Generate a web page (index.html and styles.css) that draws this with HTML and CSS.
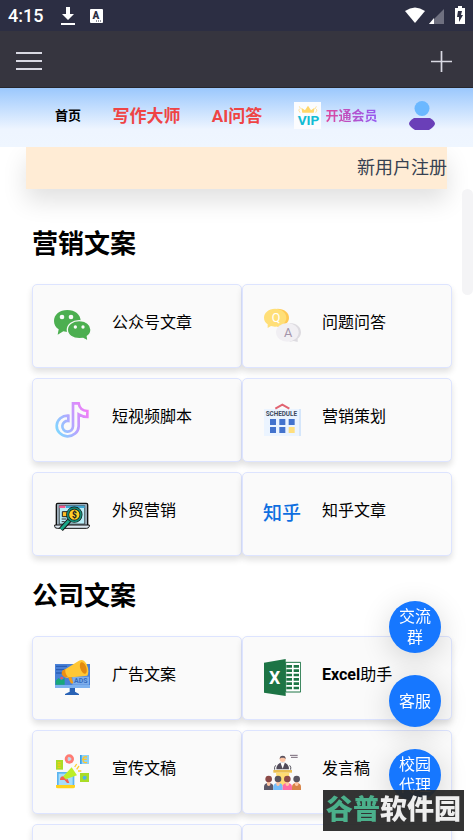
FILE: index.html
```html
<!DOCTYPE html>
<html lang="zh-CN">

<head>
    <meta charset="UTF-8">
    <meta name="viewport" content="width=device-width, initial-scale=1.0">
    <title>营销文案</title>
    <link rel="stylesheet" href="styles.css">
</head>

<body>
    <div class="status-bar">
        <span class="time">4:15</span>
        <svg class="download" width="14" height="18" viewBox="0 0 14 18">
            <path d="M5 0h4v7h4l-6 6-6-6h4z" fill="#fff" />
            <path d="M0 16h14v2H0z" fill="#fff" />
        </svg>
        <svg class="badge-a" width="13" height="14" viewBox="0 0 13 14">
            <rect width="13" height="14" rx="1" fill="#fff" />
            <text x="2.5" y="10" font-size="10" font-weight="900" fill="#2c2e43">A</text>
            <path d="M6 12h1M8 12h1M10 12h1" stroke="#2c2e43" />
        </svg>
        <svg class="signals" width="60" height="19" viewBox="0 0 60 19">
            <path d="M0 5Q10-2 20 5L10 17z" fill="#fff" />
            <path d="M39 3v15H24z" fill="#6f7080" />
            <path d="M29 12v6h-5z" fill="#fff" />
            <path d="M50 2h3V0h4v2h3v16H50z" fill="#fff" />
            <path d="M53 5h4l-1 4h2l-4 7v-5h-2z" fill="#2c2e43" />
        </svg>
    </div>

    <header class="app-bar">
        <button type="button" aria-label="菜单">
            <svg width="26" height="20" viewBox="0 0 26 20">
                <path d="M0 2h26M0 10h26M0 18h26" stroke="#d9d9e3" stroke-width="2" />
            </svg>
        </button>
        <button type="button" aria-label="新建">
            <svg width="21" height="21" viewBox="0 0 21 21">
                <path d="M0 10.500h21M10.500 0v21" stroke="#d9d9e3" stroke-width="1.700" />
            </svg>
        </button>
    </header>

    <nav class="nav">
        <a href="#" class="home">首页</a>
        <a href="#" class="hot">写作大师</a>
        <a href="#" class="hot">AI问答</a>
        <a href="#" class="vip">
            <svg width="27" height="27" viewBox="0 0 81 81">
                <rect width="81" height="81" fill="#fbfcfe" />
                <path d="M25 32l-3-15 11 8 9-14 9 14 11-8-3 15z" fill="#ffd76a" />
                <path d="M16 13l3 6-5 5 4 8M67 13l-3 6 5 5-4 8" fill="none" stroke="#ffe3a0" stroke-width="3" />
                <text x="11" y="69" font-size="41" font-weight="700" fill="#12bcd4">VIP</text>
            </svg>
            <span>开通会员</span>
        </a>
        <a href="#" aria-label="我的">
            <svg class="user" width="26" height="29" viewBox="0 0 26 29">
                <circle cx="13" cy="7.500" r="7.500" fill="#6bb8ff" />
                <path d="M0 23q0-3 5-6h16q5 3 5 6-1 3-6 6H6q-5-3-6-6z" fill="#6a3fb8" />
            </svg>
        </a>
    </nav>

    <div class="content">
        <a href="#" class="banner">新用户注册</a>
        <div class="scroll-thumb"></div>

        <main>
            <h2>营销文案</h2>
            <div class="cards">
                <a href="#" class="card">
                    <svg viewBox="0 0 114 114">
                        <path d="M43 9c23 0 40 14 40 33S66 75 43 75l-12-2-17 10 3-16C8 61 3 52 3 42 3 23 20 9 43 9z" fill="#4caf50" />
                        <g fill="#fafafa">
                            <circle cx="27" cy="30" r="7" />
                            <circle cx="54" cy="30" r="7" />
                        </g>
                        <path d="M79 41c20 0 35 12 35 27 0 9-4 15-11 20l2 14-15-8-11 1c-20 0-36-11-36-27s16-27 36-27z" fill="#4caf50" stroke="#fafafa" stroke-width="4" />
                        <g fill="#fafafa">
                            <circle cx="67" cy="60" r="5" />
                            <circle cx="90" cy="60" r="5" />
                        </g>
                    </svg>
                    <span>公众号文章</span>
                </a>
                <a href="#" class="card">
                    <svg viewBox="0 0 114 114">
                        <path d="M43 5c21 0 35 12 35 27S64 59 43 59z" fill="#ffc955" />
                        <path d="M36 5c20 0 34 12 34 27S56 59 36 59l-12-2-10 6V52C7 47 3 40 3 32 3 17 17 5 36 5z" fill="#ffdf78" />
                        <text x="26" y="45" font-size="38" fill="#fff">Q</text>
                        <path d="M80 48c20 0 34 12 34 28 0 9-4 15-10 19v10l-12-3-12 2z" fill="#dddbe0" />
                        <ellipse cx="73" cy="76" rx="34" ry="28" fill="#f1eff3" />
                        <text x="63" y="90" font-size="38" fill="#a394aa">A</text>
                    </svg>
                    <span>问题问答</span>
                </a>
                <a href="#" class="card">
                    <svg viewBox="0 0 114 114">
                        <defs>
                            <linearGradient id="note" gradientUnits="userSpaceOnUse" x1="9" y1="80" x2="107" y2="35">
                                <stop offset="0" stop-color="#82d4ff" />
                                <stop offset=".5" stop-color="#b9a2ff" />
                                <stop offset="1" stop-color="#f37cf7" />
                            </linearGradient>
                        </defs>
                        <path d="M60 7h17c2 13 11 22 26 23v18c-9 0-18-3-26-8v36a33 31 0 1 1-31-32v16a16 16 0 1 0 14 16z" fill="none" stroke="url(#note)" stroke-width="8" />
                    </svg>
                    <span>短视频脚本</span>
                </a>
                <a href="#" class="card">
                    <svg viewBox="0 0 114 114">
                        <path d="M3 24h111v81H3z" fill="#ebf4ff" />
                        <path d="M108 24h6v81h-6z" fill="#d5e6fa" />
                        <path d="M37 23l21-12 21 12" fill="none" stroke="#e16472" stroke-width="6" />
                        <text x="8" y="45" font-size="19" font-weight="700" fill="#3b485b">SCHEDULE</text>
                        <path d="M21 54h18v18H21zM49 54h18v18H49zM77 54h18v18H77zM21 78h18v18H21zM49 78h18v18H49z" fill="#4373cd" />
                        <path d="M77 78h18v18H77z" fill="#ffdf7d" />
                    </svg>
                    <span>营销策划</span>
                </a>
                <a href="#" class="card">
                    <svg viewBox="0 0 114 114">
                        <rect x="10" y="25" width="94" height="68" rx="4" fill="#9caebb" stroke="#111" stroke-width="4" />
                        <path d="M19 32h76v55H19z" fill="#b9edf8" stroke="#222" stroke-width="2" />
                        <path d="M19 32h18v7H19z" fill="#f2578e" />
                        <path d="M39 32h56v7H39z" fill="#3da8d6" />
                        <path d="M28 50h20v15H28z" fill="#ffbd24" stroke="#222" stroke-width="3" />
                        <path d="M26 72h14M26 80h9" stroke="#333" stroke-width="3" />
                        <path d="M5 90h104v4q-2 6-8 6H13q-8 0-8-6z" fill="#dce7f0" stroke="#111" stroke-width="3" />
                        <path d="M49 76l-25 27" stroke="#111" stroke-width="15" />
                        <path d="M49 76l-25 27" stroke="#1aa789" stroke-width="9" />
                        <circle cx="64" cy="59" r="20" fill="#ffce28" stroke="#111" stroke-width="9" />
                        <circle cx="64" cy="59" r="20" fill="none" stroke="#168c78" stroke-width="5" />
                        <text x="57" y="69" font-size="25" font-weight="900" fill="#222">$</text>
                    </svg>
                    <span>外贸营销</span>
                </a>
                <a href="#" class="card">
                    <b class="zhihu">知乎</b>
                    <span>知乎文章</span>
                </a>
            </div>

            <h2>公司文案</h2>
            <div class="cards">
                <a href="#" class="card">
                    <svg viewBox="0 0 114 114">
                        <path d="M50 85h16v13l12 7v3H36v-3l14-7z" fill="#2862b5" />
                        <path d="M6 15h105v72H6z" fill="#4980d7" />
                        <path d="M6 78h105v9H6z" fill="#7eb2ef" />
                        <path d="M9 22h33M9 32h28M9 42h20" stroke="#2b5fb5" stroke-width="4" />
                        <path d="M8 77V65l9-8 8 7 10-7v20z" fill="#18a879" />
                        <circle cx="26" cy="57" r="4" fill="#e65a63" />
                        <path d="M58 53h50v24H58z" fill="#7eaeea" />
                        <text x="63" y="73" font-size="21" font-weight="700" fill="#356bbd">ADS</text>
                        <path d="M28 36L78 5q13-8 23 11 9 20 2 34L42 56q-13 0-14-20z" fill="#ffc735" />
                        <path d="M28 35q-7 12 8 20l9-2q-10-8-8-23z" fill="#ec8d13" />
                        <path d="M45 54l8 18q4 4 8-1l-6-17z" fill="#f29b18" />
                        <ellipse cx="91" cy="27" rx="9" ry="18" transform="rotate(-20 91 27)" fill="#e38a10" />
                    </svg>
                    <span>广告文案</span>
                </a>
                <a href="#" class="card">
                    <svg viewBox="0 0 114 114">
                        <path d="M68 10h45v89H68z" fill="#fff" stroke="#1d7445" stroke-width="3" />
                        <path d="M70 22h17M92 22h16M70 35h17M92 35h16M70 48h17M92 48h16M70 61h17M92 61h16M70 74h17M92 74h16M70 87h17M92 87h16" stroke="#1d7445" stroke-width="8" />
                        <path d="M3 11L68 0v111L3 101z" fill="#1d7445" />
                        <text x="18" y="74" font-size="53" font-weight="700" fill="#fff">X</text>
                    </svg>
                    <span><strong>Excel</strong>助手</span>
                </a>
                <a href="#" class="card">
                    <svg viewBox="0 0 114 114">
                        <path d="M9 21h21v29H9z" fill="#a9dc27" />
                        <path d="M14 29h9M14 36h9M14 43h9" stroke="#f2cc16" stroke-width="4" />
                        <circle cx="49" cy="18" r="14" fill="#ff7b73" />
                        <circle cx="49" cy="18" r="6" fill="#ffb2a5" />
                        <path d="M46 11l10 7-10 7z" fill="#a9e0ff" />
                        <path d="M81 6h27v27H81z" fill="#8dd4fb" />
                        <path d="M81 6h5v27h-5z" fill="#3b9fe8" />
                        <path d="M102 12q-12-3-12 8t12 8M87 19h14" fill="none" stroke="#ffc52c" stroke-width="4" />
                        <path d="M81 60h27v27H81z" fill="#a9dc27" />
                        <circle cx="95" cy="74" r="6" fill="#4eb4e9" />
                        <path d="M12 57h52v39H12z" fill="#5bb5f0" />
                        <path d="M17 62h42v34H17z" fill="#a6ddfa" />
                        <path d="M9 96h57v7q-2 3-6 3H15q-6 0-6-3z" fill="#ffd21e" />
                        <path d="M28 73l28-30 16 24-39 13z" fill="#bdee27" />
                        <path d="M30 70q-9 0-9 11h19zM34 80l8 10h7l-5-12z" fill="#f46052" />
                        <path d="M65 42l6-9M71 49l7-10M75 54h10" stroke="#ffcf32" stroke-width="4" />
                    </svg>
                    <span>宣传文稿</span>
                </a>
                <a href="#" class="card">
                    <svg viewBox="0 0 114 114">
                        <path d="M40 49q0-18 19-22 19 4 19 22z" fill="#514b5a" />
                        <path d="M52 28h14l-7 19z" fill="#fff" />
                        <circle cx="59" cy="18" r="9" fill="#ffc6a4" />
                        <path d="M50 18q0-10 9-10t9 10l-5-4H54z" fill="#5a5360" />
                        <path d="M81 7h23M84 13h20" stroke="#766878" stroke-width="3" />
                        <path d="M38 37q-5 5-3 13M80 37q5 5 3 13" fill="none" stroke="#51505a" stroke-width="3" />
                        <path d="M31 51h56v8H31z" fill="#e9bd52" />
                        <path d="M39 59h40l-4 40H43z" fill="#ffdb72" />
                        <path d="M3 111V101q0-10 14-11 14 1 14 11v10z" fill="#5d5968" />
                        <path d="M31 111V101q0-10 14-11 14 1 14 11v10z" fill="#74bdfa" />
                        <path d="M59 111V101q0-10 14-11 14 1 14 11v10z" fill="#ff6ea4" />
                        <path d="M87 111V101q0-10 14-11 13 1 13 11v10z" fill="#d88549" />
                        <path d="M12 86h10v10q-5 6-10 0zM40 86h10v10q-5 6-10 0zM68 86h10v10q-5 6-10 0zM96 86h10v10q-5 6-10 0z" fill="#ffc6a4" />
                        <g fill="#8c4a48">
                            <circle cx="17" cy="78" r="10" />
                            <circle cx="73" cy="78" r="10" />
                        </g>
                        <g fill="#58545f">
                            <circle cx="45" cy="78" r="10" />
                            <circle cx="101" cy="78" r="10" />
                        </g>
                    </svg>
                    <span>发言稿</span>
                </a>
                <a href="#" class="card"></a>
                <a href="#" class="card"></a>
            </div>
        </main>
    </div>

    <div class="float-buttons">
        <button type="button">交流群</button>
        <button type="button">客服</button>
        <button type="button">校园代理</button>
    </div>

    <div class="watermark"><span>谷普</span>软件园</div>
</body>

</html>
```
FILE: styles.css
```css
* {
    margin: 0;
    padding: 0;
    box-sizing: border-box;
}

body {
    height: 100vh;
    overflow: hidden;
    display: flex;
    flex-direction: column;
    background: #fff;
    color: #000;
    font-family: Roboto, 'Noto Sans CJK SC', sans-serif;
}

a {
    color: inherit;
    text-decoration: none;
}

button {
    border: 0;
    background: transparent;
    font-family: inherit;
    cursor: pointer;
}

svg {
    display: block;
    flex-shrink: 0;
}

.status-bar {
    flex-shrink: 0;
    height: 31px;
    padding: 0 8px;
    display: flex;
    align-items: center;
    background: #2c2e43;
    color: #fff;
}

.time {
    font-size: 18px;
    font-weight: 500;
    line-height: 31px;
}

.download {
    margin-left: 18px;
}

.badge-a {
    margin-left: 15px;
}

.signals {
    margin-left: auto;
}

.app-bar {
    flex-shrink: 0;
    height: 57px;
    padding: 4px 21px 0 16px;
    display: flex;
    align-items: center;
    justify-content: space-between;
    background: #36353f;
    border-bottom: 1px solid #27272d;
}

/* top navigation */
.nav {
    position: relative;
    z-index: 1;
    flex-shrink: 0;
    height: 59px;
    padding: 0 38px 4px 55px;
    display: flex;
    align-items: center;
    justify-content: space-between;
    white-space: nowrap;
    background: linear-gradient(#9bc8fd, #eef5ff 70%, #eff6ff);
}

.home,
.hot,
.vip span {
    padding-bottom: 2px;
    font-weight: 700;
}

.home,
.vip span {
    font-size: 13px;
}

.hot {
    font-size: 17px;
    color: #ef4444;
}

.vip {
    display: flex;
    align-items: center;
    gap: 5px;
}

.vip span {
    background: linear-gradient(to right, #dd489d, #9259f3);
    background-clip: text;
    -webkit-background-clip: text;
    color: transparent;
}

.content {
    position: relative;
    flex: 1;
    min-height: 0;
    overflow: hidden;
}

.banner {
    display: block;
    margin: 0 26px;
    height: 42px;
    line-height: 42px;
    text-align: right;
    font-size: 18px;
    color: #374151;
    background: #ffecd5;
    box-shadow: 0 12px 24px rgba(0, 0, 0, 0.12);
}

.scroll-thumb {
    position: absolute;
    top: 42px;
    right: 0;
    width: 11px;
    height: 106px;
    border-radius: 6px;
    background: #f4f4f6;
}

main {
    padding: 15px 21px 0 32px;
}

h2 {
    margin: 22px 0;
    font-size: 26px;
    line-height: 36px;
    font-weight: 700;
}

.cards {
    display: grid;
    grid-template-columns: 1fr 1fr;
    row-gap: 10px;
}

.card {
    height: 84px;
    padding: 0 20px;
    display: flex;
    align-items: center;
    gap: 21px;
    border: 1px solid #dde4ff;
    border-radius: 5px;
    background: #fafafa;
    box-shadow: 0 4px 6px rgba(0, 0, 0, 0.12);
    font-size: 16px;
    line-height: 24px;
}

.card svg {
    width: 38px;
    height: 38px;
}

.card span {
    padding-bottom: 6px;
    white-space: nowrap;
}

.zhihu {
    width: 38px;
    text-align: center;
    font-size: 19px;
    font-weight: 500;
    color: #0f6fe0;
}

/* floating contact buttons */
.float-buttons {
    position: fixed;
    right: 32px;
    bottom: 39px;
    display: flex;
    flex-direction: column;
    gap: 22px;
}

.float-buttons button {
    width: 52px;
    height: 52px;
    padding: 0 10px;
    border-radius: 50%;
    background: #1677ff;
    color: #fff;
    font-size: 16px;
    line-height: 21px;
    box-shadow: 0 6px 30px rgba(0, 0, 0, 0.16);
}

.watermark {
    position: fixed;
    right: 9px;
    bottom: 9px;
    width: 141px;
    height: 41px;
    line-height: 40px;
    text-align: center;
    white-space: nowrap;
    font-size: 27px;
    font-weight: 900;
    color: #eee;
    background: rgba(38, 38, 38, 0.94);
}

.watermark span {
    color: #4bb08b;
}
```
